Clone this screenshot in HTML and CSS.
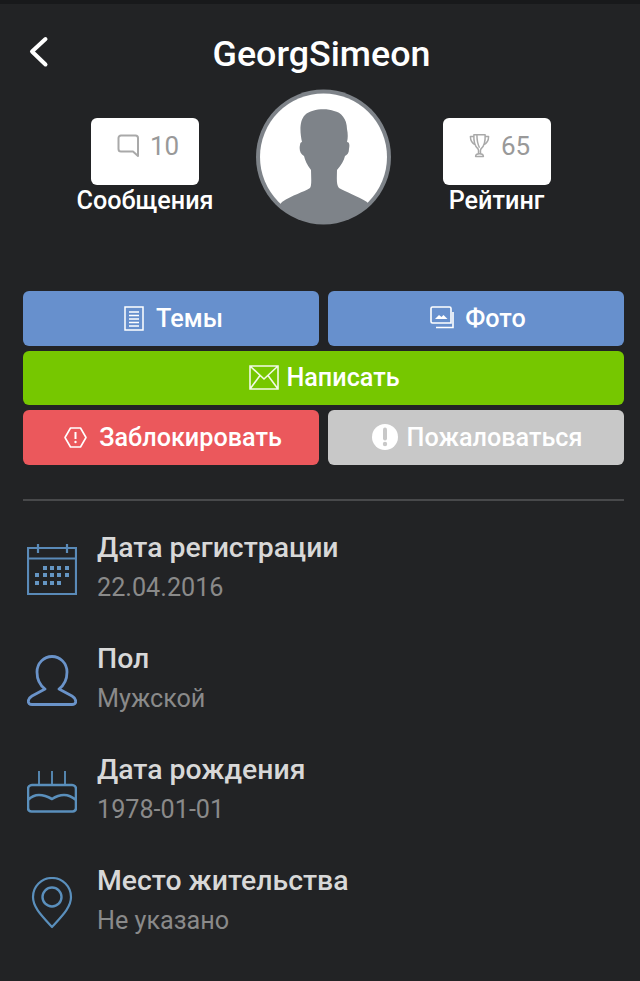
FILE: index.html
```html
<!DOCTYPE html>
<html lang="ru">
<head>
<meta charset="utf-8">
<title>GeorgSimeon</title>
<link rel="stylesheet" href="styles.css">
</head>
<body>
<div class="statusbar"></div>
<main class="page">
  <header class="header">
    <a class="back" href="#" aria-label="Назад">
      <svg width="22" height="32" viewBox="0 0 22 32"><path d="M18.500 3 5 15.500 18.500 28.500" fill="none" stroke="#fff" stroke-width="4" stroke-linecap="round" stroke-linejoin="round"/></svg>
    </a>
    <h1 class="title">GeorgSimeon</h1>
  </header>

  <section class="stats">
    <div class="stat">
      <div class="stat-card">
        <svg width="24" height="24" viewBox="0 0 24 24"><path d="M5 1.500h14.500a2.500 2.500 0 0 1 2.500 2.500v18l-5-4.500H5a2.500 2.500 0 0 1-2.500-2.500V4A2.500 2.500 0 0 1 5 1.500z" fill="none" stroke="#a9a9a9" stroke-width="2" stroke-linejoin="round"/></svg>
        <span>10</span>
      </div>
      <div class="stat-label">Сообщения</div>
    </div>
    <div class="avatar">
      <svg width="135" height="136" viewBox="0 0 135 136">
        <defs><clipPath id="avatar-clip"><circle cx="67.500" cy="68" r="66"/></clipPath></defs>
        <circle cx="67.500" cy="68" r="67.500" fill="#7e8389"/>
        <circle cx="67.500" cy="68" r="63.500" fill="#fff"/>
        <path clip-path="url(#avatar-clip)" d="M26 113C36 106 48 103 54 99 56 96 55 88 55 81 51 76 49 71 48 67 44 65 43 60 44 56 44 54 45 53 46 53 44 44 43 32 49 26 55 20 70 19 78 22 85 23 91 30 91 40 92 45 92 49 91 53 93 53 94 55 93 60 93 64 91 66 89 67 88 72 85 76 81 81 81 88 80 96 83 99 90 103 101 107 111 113L130 140H5z" fill="#7e8389"/>
      </svg>
    </div>
    <div class="stat">
      <div class="stat-card stat-card-rating">
        <svg width="21" height="26" viewBox="0 0 24 30"><path d="M5.500 2h13c.3 7-1 13-4.500 16-1 1-1 4-.8 6h-2.400c.2-2 .2-5-.8-6C6.500 15 5.200 9 5.500 2zM5.500 4H1.500c0 5 2 8 6 10M18.500 4h4c0 5-2 8-6 10M9 2c0 6 1 11 3 15M7.500 27c0-2 2-3 4.500-3s4.500 1 4.500 3z" fill="none" stroke="#a9a9a9" stroke-width="1.700" stroke-linejoin="round"/></svg>
        <span>65</span>
      </div>
      <div class="stat-label">Рейтинг</div>
    </div>
  </section>

  <section class="actions">
    <a class="btn btn-blue btn-topics" href="#">
      <svg width="20" height="25" viewBox="0 0 20 25"><path d="M1 1h18v23H1zM5 6h10M5 9.500h10M5 13h10M5 16.500h10M5 20h10" fill="none" stroke="#fff" stroke-width="1.500"/></svg>
      <span>Темы</span>
    </a>
    <a class="btn btn-blue btn-photo" href="#">
      <svg width="24" height="24" viewBox="0 0 24 24"><path d="M2.500 1h17a1.500 1.500 0 0 1 1.500 1.500V17H2.500A1.500 1.500 0 0 1 1 15.500v-13A1.500 1.500 0 0 1 2.500 1zM23 6v15.500H6" fill="none" stroke="#fff" stroke-width="1.600"/><path d="M5 13l4-4 2.500 2 2-2 4 4z" fill="#fff"/></svg>
      <span>Фото</span>
    </a>
    <a class="btn btn-green btn-wide" href="#">
      <svg width="30" height="25" viewBox="0 0 30 25"><path d="M1 1h28v23H1zM1 1l14 13L29 1M1 24l10-13.500M29 24 19 10.500" fill="none" stroke="#fff" stroke-width="1.600" opacity=".9"/></svg>
      <span>Написать</span>
    </a>
    <a class="btn btn-red" href="#">
      <svg width="23" height="21" viewBox="0 0 23 21"><path d="M6.500 1h10l5.500 9.500-5.500 9.500h-10L1 10.500z" fill="none" stroke="#fff" stroke-width="1.600" stroke-linejoin="round"/><path d="M11.500 5v7" stroke="#fff" stroke-width="2"/><circle cx="11.500" cy="15" r="1.200" fill="#fff"/></svg>
      <span>Заблокировать</span>
    </a>
    <a class="btn btn-gray" href="#">
      <svg width="26" height="26" viewBox="0 0 26 26"><circle cx="13" cy="13" r="13" fill="#fff"/><path d="M13 5.500v9" stroke="#c8c8c8" stroke-width="4" stroke-linecap="round"/><circle cx="13" cy="20" r="2.200" fill="#c8c8c8"/></svg>
      <span>Пожаловаться</span>
    </a>
  </section>

  <hr class="divider">

  <section class="info">
    <div class="info-row">
      <svg class="info-icon" width="50" height="51" viewBox="0 0 50 51"><path d="M1 4h48v46H1zM1 14.500h48M11 0v9M40 0v9" fill="none" stroke="#5a8ab8" stroke-width="2.200"/><path fill="#6596c4" d="M16 22h4v4h-4zM23 22h4v4h-4zM30 22h4v4h-4zM38 22h4v4h-4zM8 29h4v4H8zM16 29h4v4h-4zM23 29h4v4h-4zM30 29h4v4h-4zM38 29h4v4h-4zM8 37h4v4H8zM16 37h4v4h-4zM23 37h4v4h-4zM30 37h4v4h-4z"/></svg>
      <div class="info-text">
        <div class="info-title">Дата регистрации</div>
        <div class="info-value">22.04.2016</div>
      </div>
    </div>
    <div class="info-row">
      <svg class="info-icon" width="50" height="51" viewBox="0 0 50 51"><path d="M25 1.500C33 1.500 40 8 40 17 40 25 36 31 32 34L45 41C50 44 50 49.500 45 49.500H5C0 49.500 0 44 5 41L18 34C14 31 10 25 10 17 10 8 17 1.500 25 1.500z" fill="none" stroke="#6a93c9" stroke-width="2.800" stroke-linejoin="round"/></svg>
      <div class="info-text">
        <div class="info-title">Пол</div>
        <div class="info-value">Мужской</div>
      </div>
    </div>
    <div class="info-row">
      <svg class="info-icon" width="50" height="43" viewBox="0 0 50 43"><g fill="none" stroke="#5a8fbc" stroke-width="2.600" stroke-linejoin="round"><path d="M5 15h40a4 4 0 0 1 4 4v19a3.500 3.500 0 0 1-3.500 3.500h-41A3.500 3.500 0 0 1 1 38V19a4 4 0 0 1 4-4zM1 30Q6 25 12 25 18 25 25 29 31 25 37 25 43 25 49 30"/><path d="M12 1v13M25 1v13M38 1v13" stroke-width="1.800"/></g></svg>
      <div class="info-text">
        <div class="info-title">Дата рождения</div>
        <div class="info-value">1978-01-01</div>
      </div>
    </div>
    <div class="info-row">
      <svg class="info-icon" width="50" height="52" viewBox="0 0 50 52"><g fill="none" stroke="#5a8fbc" stroke-width="2.200"><path d="M25 50C14 38 6 30 6 20a19 19 0 0 1 38 0c0 10-8 18-19 30z" stroke-linejoin="round"/><circle cx="25" cy="20" r="9.500" stroke-width="2.400"/></g></svg>
      <div class="info-text">
        <div class="info-title">Место жительства</div>
        <div class="info-value">Не указано</div>
      </div>
    </div>
  </section>
</main>
</body>
</html>
```

FILE: styles.css
```css
* { box-sizing: border-box; }
html, body { margin: 0; height: 100%; }
body {
  background: #222325;
  font-family: Roboto, "Liberation Sans", sans-serif;
  overflow: hidden;
}
a { text-decoration: none; color: inherit; }

.statusbar { height: 4px; background: #18191b; }

.page { display: flex; flex-direction: column; }

.header {
  display: flex;
  justify-content: center;
  align-items: center;
  height: 85px;
  padding: 15px 0 0 3px;
  position: relative;
}
.back { position: absolute; left: 27px; top: 32px; display: block; line-height: 0; }
.title {
  margin: 0;
  color: #fff;
  font-size: 35.800px;
  font-weight: 500;
  line-height: 42px;
}

.stats {
  display: grid;
  grid-template-columns: 136px 135px 125px;
  column-gap: 43px;
  padding-left: 77px;
  height: 202px;
}
.stat { display: flex; flex-direction: column; align-items: center; padding-top: 29px; }
.stat-card {
  width: 108px;
  height: 67px;
  background: #fff;
  border-radius: 6px;
  display: flex;
  align-items: center;
  justify-content: center;
  gap: 10px;
  padding: 0 0 12px 5px;
  color: #999;
  font-size: 26px;
}
.stat-card-rating { gap: 11px; padding-left: 6px; }
.stat-label {
  margin-top: 1px;
  color: #fff;
  font-size: 25.200px;
  font-weight: 500;
  line-height: 30px;
  white-space: nowrap;
}
.avatar { line-height: 0; }

.actions {
  display: grid;
  grid-template-columns: 296px 296px;
  grid-auto-rows: 54.500px;
  column-gap: 9px;
  row-gap: 5px;
  padding-left: 23px;
}
.btn {
  display: flex;
  align-items: center;
  justify-content: center;
  gap: 11px;
  padding-left: 2px;
  border-radius: 6px;
  color: #fff;
  font-size: 25.200px;
  font-weight: 500;
}
.btn-topics { gap: 12px; padding-left: 5px; }
.btn-photo { padding-left: 4px; }
.btn-wide { grid-column: 1 / -1; gap: 7px; background: #76c700; }
.btn-blue { background: #6790cd; }
.btn-red { background: #eb585c; gap: 12px; padding-left: 4px; }
.btn-gray { background: #c8c8c8; gap: 9px; }

.divider {
  margin: 34px 16px 0 23px;
  border: 0;
  height: 2px;
  background: #48494b;
}

.info {
  display: flex;
  flex-direction: column;
  padding: 25px 0 0 27px;
  row-gap: 29px;
}
.info-row { display: flex; align-items: center; column-gap: 20px; height: 82px; }
.info-icon { flex: none; margin-top: 6px; }
.info-title {
  color: #d8d8d8;
  font-size: 28.400px;
  font-weight: 500;
  line-height: 36px;
}
.info-value {
  color: #8a8a8a;
  font-size: 25.200px;
  line-height: 30px;
  margin-top: 7px;
}
```
